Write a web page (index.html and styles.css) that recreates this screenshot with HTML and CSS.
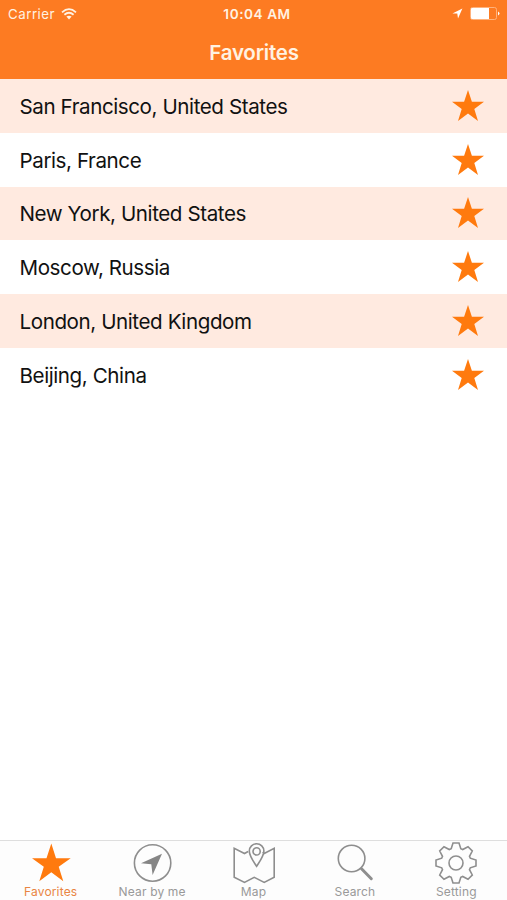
FILE: index.html
```html
<!DOCTYPE html>
<html lang="en">
<head>
<meta charset="utf-8">
<title>Favorites</title>
<link rel="stylesheet" href="styles.css">
</head>
<body>
<svg class="defs" aria-hidden="true"><symbol id="star" viewBox="0 0 32 31"><path d="M16 0l3.9 11.7H32l-9.7 7.2L26 31l-10-7.4L6 31l3.7-12.1L0 11.7h12.1z"/></symbol></svg>
<div class="app">
  <header class="header">
    <div class="status">
      <div class="side"><span class="carrier">Carrier</span>
        <svg class="wifi" width="16" height="12" viewBox="0 0 16 12"><path d="M1 4.3Q8-2 15 4.3M3.4 6.8Q8 2.8 12.6 6.8" fill="none" stroke="currentColor" stroke-width="1.8"/><path d="M5.4 8.6Q8 6.7 10.6 8.6L8 11.4z" fill="currentColor"/></svg>
      </div>
      <span class="time">10:04 AM</span>
      <div class="side right">
        <svg width="11" height="11" viewBox="0 0 11 11"><path d="M.4 5.4L10.4.5 6 10.5 5.3 5.6z" fill="currentColor"/></svg>
        <svg class="battery" width="30" height="13" viewBox="0 0 30 13"><rect x=".5" y=".5" width="26" height="12" rx="2" fill="none" stroke="#ffb27c"/><path d="M2 1h17v11H2q-1 0-1-1V2q0-1 1-1z" fill="#fff"/><path d="M28 4.5q3 2 0 4z" fill="#fff"/></svg>
      </div>
    </div>
    <h1 class="title">Favorites</h1>
  </header>
  <ul class="list">
    <li class="row"><span>San Francisco, United States</span><svg class="star"><use href="#star"/></svg></li>
    <li class="row"><span>Paris, France</span><svg class="star"><use href="#star"/></svg></li>
    <li class="row"><span>New York, United States</span><svg class="star"><use href="#star"/></svg></li>
    <li class="row"><span>Moscow, Russia</span><svg class="star"><use href="#star"/></svg></li>
    <li class="row"><span>London, United Kingdom</span><svg class="star"><use href="#star"/></svg></li>
    <li class="row"><span>Beijing, China</span><svg class="star"><use href="#star"/></svg></li>
  </ul>
  <nav class="tabs">
    <a class="tab active"><svg class="icon" viewBox="-22 -22 44 44"><path class="solid" d="M.3-19.5L5-4.8h14.7L7.7 3.7 12.3 18.3.3 9.3l-12 9L-7.2 3.7-19-4.8H-4.5z"/></svg><span>Favorites</span></a>
    <a class="tab"><svg class="icon" viewBox="-22 -22 44 44"><circle cx=".6" r="18.2"/><path class="solid" d="M-11 .3L10-9.3.6 12-.7 1.3z"/></svg><span>Near by me</span></a>
    <a class="tab"><svg class="icon" viewBox="-22 -22 44 44"><path d="M-5.9-11.5L-9.5-9.5-19.8-14.6V14.3L-9.5 19.4.2 14.3 10.2 19.4 20.2 14.3V-14.6L10.2-9.5 8.6-10.8M2.6 3.3C-.5-1.5-4.7-7-4.7-12a7.3 7.3 0 0 1 14.6 0C9.9-7 5.7-1.5 2.6 3.3z"/><circle cx="2.6" cy="-11.6" r="3.6"/></svg><span>Map</span></a>
    <a class="tab"><svg class="icon" viewBox="-22 -22 44 44"><circle cx="-3.4" cy="-4.5" r="13.3"/><path class="handle" d="M6.5 5.8L16.3 15.7"/></svg><span>Search</span></a>
    <a class="tab"><svg class="icon" viewBox="-22 -22 44 44"><path d="M-4.8-14.3L-3-20H3L4.8-14.3 6.7-13.5 12-16.3 16.3-12 13.5-6.7 14.3-4.8 20-3V3L14.3 4.8 13.5 6.7 16.3 12 12 16.3 6.7 13.5 4.8 14.3 3 20H-3L-4.8 14.3-6.7 13.5-12 16.3-16.3 12-13.5 6.7-14.3 4.8-20 3V-3L-14.3-4.8-13.5-6.7-16.3-12-12-16.3-6.7-13.5z"/><circle r="7"/></svg><span>Setting</span></a>
  </nav>
</div>
</body>
</html>
```
FILE: styles.css
```css
* { box-sizing: border-box; }
body { margin: 0; background: #fff; font-family: Inter, "Liberation Sans", sans-serif; }
.defs { display: none; }
.app { display: flex; flex-direction: column; height: 900px; }
.header { height: 79px; background: #fd7b22; color: #fff2e2; }
.status { display: flex; height: 27px; padding: 0 7px 0 8px; align-items: center; font-size: 13px; }
.side { display: flex; flex: 1; align-items: center; gap: 6px; }
.right { justify-content: flex-end; color: #fff; gap: 7px; }
.carrier { font-size: 13.3px; letter-spacing: .5px; }
.time { font-size: 13.6px; font-weight: 600; letter-spacing: .55px; margin-left: 6px; }
.title { margin: 0; padding-left: 1px; font-size: 20.5px; line-height: 51px; font-weight: 600; text-align: center; letter-spacing: -.2px; }
.list { list-style: none; margin: 0; padding: 0; flex: 1; color: #111; }
.row { display: flex; align-items: center; justify-content: space-between; height: 53.8px; padding: 0 23px 0 19.5px; font-size: 20.6px; letter-spacing: -.42px; }
.row span { padding-top: 1px; }
.row:nth-child(odd) { background: #ffeae0; }
.star { width: 32px; height: 31px; margin-bottom: 1px; fill: #ff7a0e; }
.tabs { display: flex; height: 60px; border-top: 1px solid #dedede; background: #fdfdfd; color: #999; }
.tab { flex: 1; display: flex; flex-direction: column; align-items: center; font-size: 12px; line-height: 14px; letter-spacing: .15px; }
.icon { width: 44px; height: 44px; fill: none; stroke: #8e8e8e; stroke-width: 1.6; }
.icon .solid { fill: #858585; stroke: none; }
.icon .handle { stroke-width: 3; stroke-linecap: round; }
.active { color: #e98543; }
.active .icon .solid { fill: #ff7a0e; }
```
